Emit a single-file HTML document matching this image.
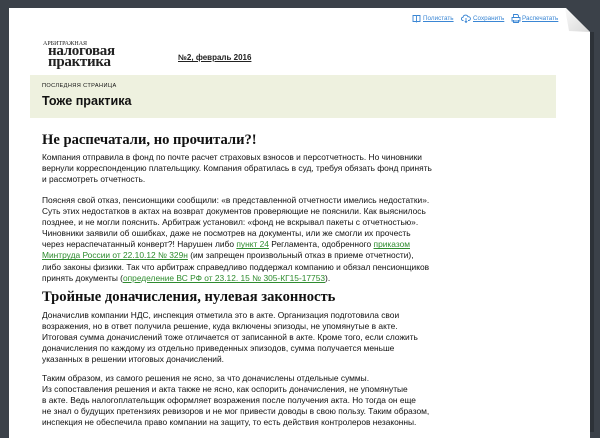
<!DOCTYPE html>
<html><head><meta charset="utf-8"><style>
html,body{margin:0;padding:0}
body{width:600px;height:427px;overflow:hidden;background:#3b4149;position:relative;font-family:"Liberation Sans",Arial,sans-serif;color:#111}
.page{position:absolute;left:9px;top:8px;width:581px;height:430px;background:#fff}
.shadow{position:absolute;left:590px;top:32px;width:4px;height:400px;background:#2d3238}
.links{position:absolute;top:15px;font-size:6.3px;color:#3a86d4;white-space:nowrap}
.links span{text-decoration:underline;position:absolute}
.logo{position:absolute;left:42px;top:41px;font-family:"Liberation Serif",serif;color:#222}
.num{position:absolute;left:178px;top:53px;font-size:8px;font-weight:bold;text-decoration:underline;color:#222}
.band{position:absolute;left:30px;top:75px;width:526px;height:43px;background:#eef1df}
.kick{position:absolute;left:12px;top:8px;font-size:5.6px;letter-spacing:0.4px}
.bt{position:absolute;left:12px;top:19px;font-size:12.6px;font-weight:bold}
h2{position:absolute;left:42px;margin:0;font-family:"Liberation Serif",serif;font-weight:bold;font-size:14.6px;white-space:nowrap}
.p{position:absolute;left:42px;font-size:8.4px;line-height:11.1px;white-space:nowrap}
a{color:#2e8b2e;text-decoration:underline}
</style></head><body>
<div class="page"></div>
<svg style="position:absolute;left:0;top:0" width="600" height="60">
<polygon points="565,7 600,7 600,40 591,33" fill="#3b4149"/>
<defs><linearGradient id="g" x1="0" y1="0" x2="1" y2="1"><stop offset="0" stop-color="#fafafa"/><stop offset="1" stop-color="#d8d8d8"/></linearGradient></defs>
<polygon points="565,8 590,32 569,31" fill="url(#g)"/>
</svg>
<div class="shadow"></div>
<div class="links">
<svg style="position:absolute;left:412px;top:-1px" width="9" height="9"><path d="M1 1.5h3l.5.5.5-.5h3v6h-3l-.5.5-.5-.5h-3z M4.5 2v5.5" fill="none" stroke="#3a86d4" stroke-width=".9"/></svg>
<span style="left:423px">Полистать</span>
<svg style="position:absolute;left:461px;top:-1px" width="10" height="9"><path d="M2.5 6.5h-.5a1.6 1.6 0 0 1 0-3.2 2.6 2.6 0 0 1 5-.5 1.7 1.7 0 0 1 1 3.7h-1 M5 4v4.5 M3.8 7.3l1.2 1.2 1.2-1.2" fill="none" stroke="#3a86d4" stroke-width=".9"/></svg>
<span style="left:473px">Сохранить</span>
<svg style="position:absolute;left:511px;top:-1px" width="10" height="9"><path d="M2.5 3.5v-3h4l1 1v2 M1 3.5h8v3.5h-8z M2.5 6v2.5h5v-2.5" fill="none" stroke="#3a86d4" stroke-width=".9"/></svg>
<span style="left:522px">Распечатать</span>
</div>
<div class="logo">
<div style="font-size:6px;position:absolute;top:0;left:1px;white-space:nowrap">АРБИТРАЖНАЯ</div>
<div style="font-size:15px;font-weight:bold;position:absolute;top:5px;left:6px;line-height:10.5px;white-space:nowrap;letter-spacing:-0.3px">налоговая<br>практика</div>
</div>
<div class="num">№2, февраль 2016</div>
<div class="band"><div class="kick">ПОСЛЕДНЯЯ СТРАНИЦА</div><div class="bt">Тоже практика</div></div>
<h2 style="top:132px">Не распечатали, но прочитали?!</h2>
<div class="p" style="top:152px">Компания отправила в фонд по почте расчет страховых взносов и персотчетность. Но чиновники<br>вернули корреспонденцию плательщику. Компания обратилась в суд, требуя обязать фонд принять<br>и рассмотреть отчетность.</div>
<div class="p" style="top:195px">Поясняя свой отказ, пенсионщики сообщили: «в представленной отчетности имелись недостатки».<br>Суть этих недостатков в актах на возврат документов проверяющие не пояснили. Как выяснилось<br>позднее, и не могли пояснить. Арбитраж установил: «фонд не вскрывал пакеты с отчетностью».<br>Чиновники заявили об ошибках, даже не посмотрев на документы, или же смогли их прочесть<br>через нераспечатанный конверт?! Нарушен либо <a>пункт 24</a> Регламента, одобренного <a>приказом</a><br><a>Минтруда России от 22.10.12 № 329н</a> (им запрещен произвольный отказ в приеме отчетности),<br>либо законы физики. Так что арбитраж справедливо поддержал компанию и обязал пенсионщиков<br>принять документы (<a>определение ВС РФ от 23.12. 15 № 305-КГ15-17753</a>).</div>
<h2 style="top:289px">Тройные доначисления, нулевая законность</h2>
<div class="p" style="top:310px">Доначислив компании НДС, инспекция отметила это в акте. Организация подготовила свои<br>возражения, но в ответ получила решение, куда включены эпизоды, не упомянутые в акте.<br>Итоговая сумма доначислений тоже отличается от записанной в акте. Кроме того, если сложить<br>доначисления по каждому из отдельно приведенных эпизодов, сумма получается меньше<br>указанных в решении итоговых доначислений.</div>
<div class="p" style="top:373px">Таким образом, из самого решения не ясно, за что доначислены отдельные суммы.<br>Из сопоставления решения и акта также не ясно, как оспорить доначисления, не упомянутые<br>в акте. Ведь налогоплательщик оформляет возражения после получения акта. Но тогда он еще<br>не знал о будущих претензиях ревизоров и не мог привести доводы в свою пользу. Таким образом,<br>инспекция не обеспечила право компании на защиту, то есть действия контролеров незаконны.</div>
</body></html>
